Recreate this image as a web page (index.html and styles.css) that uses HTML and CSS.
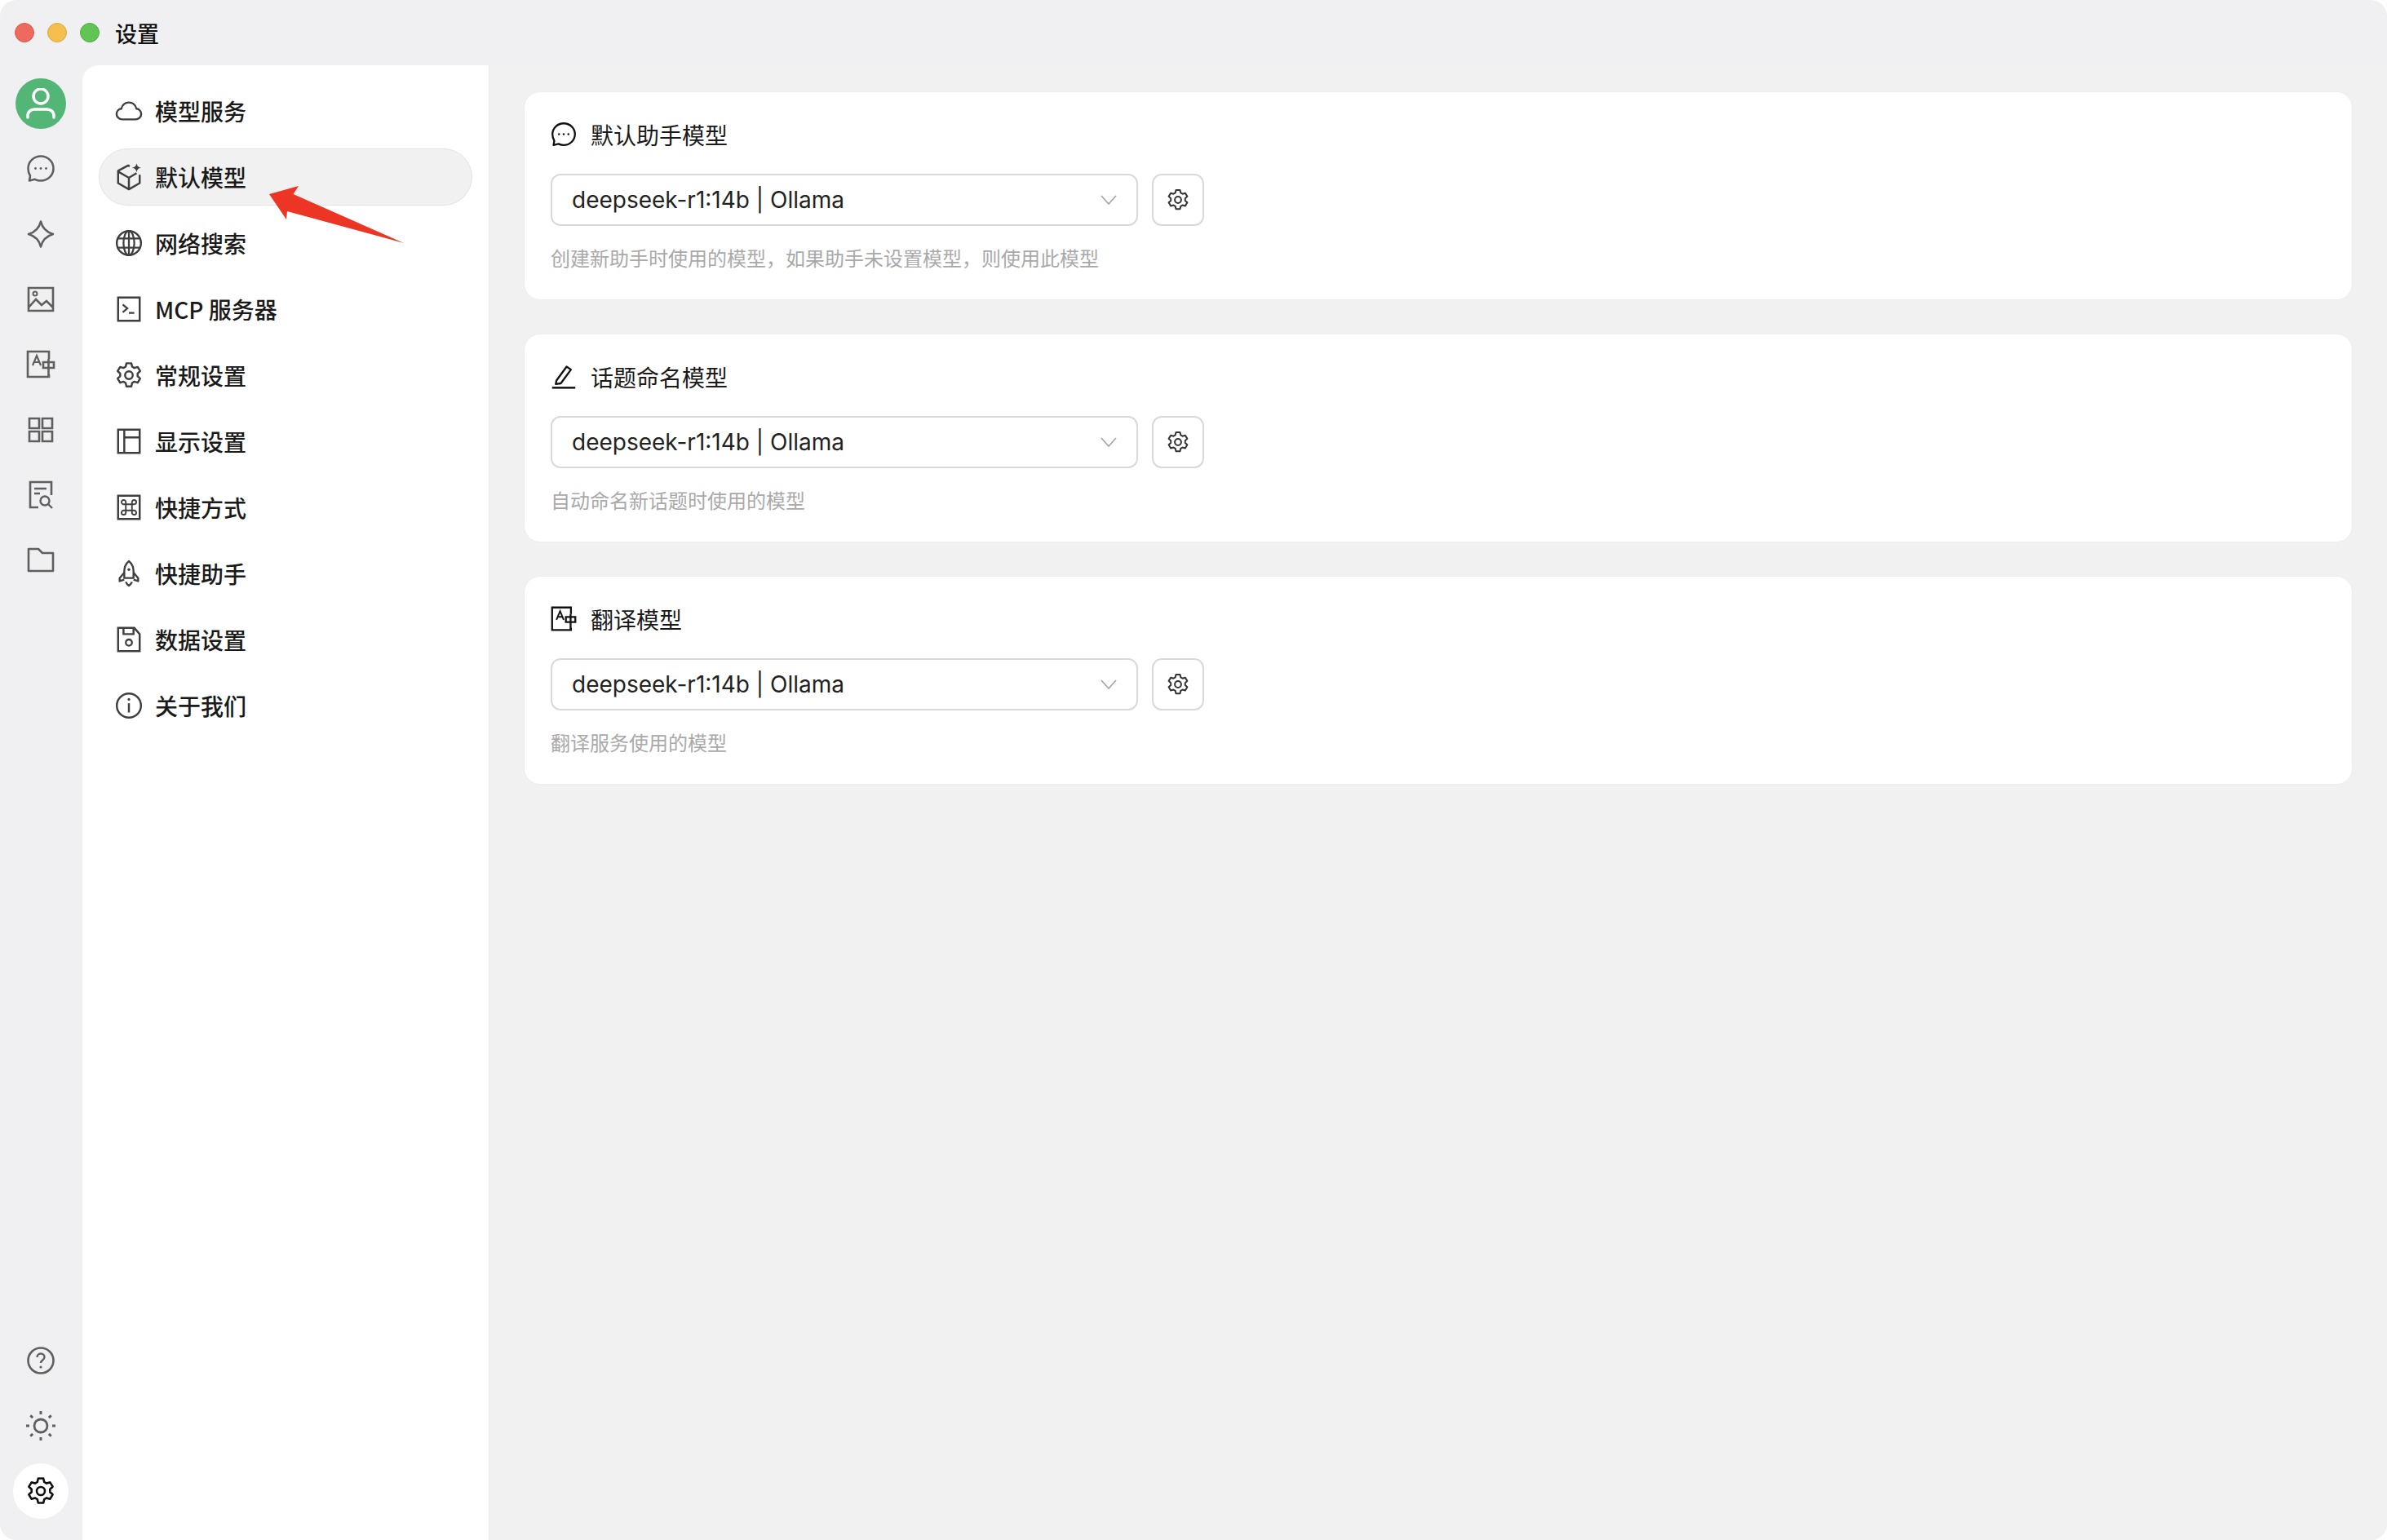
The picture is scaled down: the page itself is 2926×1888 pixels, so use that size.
FILE: index.html
```html
<!DOCTYPE html>
<html lang="zh-CN">
<head>
    <meta charset="UTF-8">
    <title>设置</title>
    <link rel="stylesheet" href="styles.css">
</head>
<body>
    <svg width="0" height="0" class="defs">
        <defs>
            <symbol id="i-chat" viewBox="0 0 36 36"><path d="M18 2.5c8.6 0 15.5 6.6 15.5 15s-6.900 15-15.500 15c-2.600 0-5-.6-7.200-1.700l-6.800 1.700 1-6c-1.600-2.500-2.500-5.700-2.500-9 0-8.400 6.900-15 15.500-15z" fill="none" stroke="currentColor" stroke-width="2.600" stroke-linejoin="round"/><circle cx="11.500" cy="17.500" r="1.400" fill="currentColor"/><circle cx="18" cy="17.500" r="1.400" fill="currentColor"/><circle cx="24.500" cy="17.500" r="1.400" fill="currentColor"/></symbol>
            <symbol id="i-star" viewBox="0 0 36 36"><path d="M18 2.500c1.800 7.500 6.500 13 15 15.500-8.500 2.500-13.200 8-15 15.500C16.200 26 11.500 20.500 3 18c8.500-2.500 13.200-8 15-15.500z" fill="none" stroke="currentColor" stroke-width="2.600" stroke-linejoin="round"/></symbol>
            <symbol id="i-image" viewBox="0 0 36 36"><path d="M3 4h30v28H3z M3 28l9-10 7 7 6-5 8 8" fill="none" stroke="currentColor" stroke-width="2.600"/><circle cx="11" cy="11" r="2.500" fill="none" stroke="currentColor" stroke-width="2"/></symbol>
            <symbol id="i-translate" viewBox="0 0 36 36"><path d="M28 11V2H2v31h26v-3" fill="none" stroke="currentColor" stroke-width="2.600"/><path d="M8 19l5-12 5 12M10 15h6" fill="none" stroke="currentColor" stroke-width="2.200"/><path d="M21 15h13v7H21z M27.500 11v22" fill="none" stroke="currentColor" stroke-width="2.600"/></symbol>
            <symbol id="i-grid" viewBox="0 0 36 36"><path d="M4 4h12v12H4z M20 4h12v12H20z M4 20h12v12H4z M20 20h12v12H20z" fill="none" stroke="currentColor" stroke-width="2.600"/></symbol>
            <symbol id="i-doc" viewBox="0 0 36 36"><path d="M15 33H5V2h26v16" fill="none" stroke="currentColor" stroke-width="2.600"/><path d="M10 10h15M10 16h7" fill="none" stroke="currentColor" stroke-width="2.400"/><circle cx="23" cy="25" r="5.500" fill="none" stroke="currentColor" stroke-width="2.400"/><path d="M27 29l5 5" stroke="currentColor" stroke-width="2.400"/></symbol>
            <symbol id="i-folder" viewBox="0 0 36 36"><path d="M3 4h12l5 5h13v22H3z" fill="none" stroke="currentColor" stroke-width="2.600" stroke-linejoin="round"/></symbol>
            <symbol id="i-help" viewBox="0 0 36 36"><circle cx="18" cy="18" r="15.500" fill="none" stroke="currentColor" stroke-width="2.600"/><path d="M13.500 14c0-2.600 2-4.500 4.500-4.500s4.500 1.800 4.500 4.200c0 3.800-4.500 3.700-4.500 7.300" fill="none" stroke="currentColor" stroke-width="2.400"/><circle cx="18" cy="26" r="1.600" fill="currentColor"/></symbol>
            <symbol id="i-sun" viewBox="0 0 36 36"><circle cx="18" cy="18" r="8" fill="none" stroke="currentColor" stroke-width="2.800"/><path d="M18 0v4M18 32v4M0 18h4M32 18h4M5.300 5.300l2.800 2.800M27.900 27.900l2.800 2.800M5.300 30.700l2.800-2.800M27.900 8.100l2.800-2.800" stroke="currentColor" stroke-width="3"/></symbol>
            <symbol id="i-gear" viewBox="0 0 36 36"><path d="M14.800 2.500h6.400l1 4.400 2.900 1.700 4.300-1.300 3.200 5.400-3.300 3.100v3.400l3.300 3.100-3.200 5.400-4.300-1.300-2.900 1.700-1 4.400h-6.400l-1-4.400-2.900-1.700-4.300 1.300-3.200-5.400 3.300-3.100v-3.400L3.400 12.700l3.200-5.400 4.300 1.300 2.900-1.700z" fill="none" stroke="currentColor" stroke-width="2.600" stroke-linejoin="round"/><circle cx="18" cy="18" r="5" fill="none" stroke="currentColor" stroke-width="2.600"/></symbol>
            <symbol id="i-cloud" viewBox="0 0 36 36"><path d="M9.500 29C5.300 29 2 25.900 2 22c0-3.500 2.700-6.400 6.200-6.900C9.300 10.400 13.300 7 18 7s8.700 3.400 9.800 8.100c3.500.5 6.200 3.400 6.200 6.900 0 3.900-3.300 7-7.500 7z" fill="none" stroke="currentColor" stroke-width="2.600" stroke-linejoin="round"/></symbol>
            <symbol id="i-cube" viewBox="0 0 36 36"><path d="M19 4L17 3 4 10v16l14 8 14-8V15" fill="none" stroke="currentColor" stroke-width="2.600" stroke-linejoin="round"/><path d="M4 11l14 8 10-6M18 19v15" fill="none" stroke="currentColor" stroke-width="2.600"/><path d="M28 0c.6 3.800 2.200 5.400 6 6-3.800.6-5.400 2.200-6 6-.6-3.800-2.200-5.400-6-6 3.800-.6 5.400-2.200 6-6z" fill="currentColor"/></symbol>
            <symbol id="i-globe" viewBox="0 0 36 36"><circle cx="18" cy="18" r="15.700" fill="none" stroke="currentColor" stroke-width="2.600"/><ellipse cx="18" cy="18" rx="7" ry="15.700" fill="none" stroke="currentColor" stroke-width="2.400"/><path d="M18 2v32M3 12h30M3 24h30" stroke="currentColor" stroke-width="2.400"/></symbol>
            <symbol id="i-terminal" viewBox="0 0 36 36"><path d="M4 3h28v30H4z" fill="none" stroke="currentColor" stroke-width="2.600"/><path d="M10 12l6 5-6 5M18 23h7" fill="none" stroke="currentColor" stroke-width="2.400"/></symbol>
            <symbol id="i-layout" viewBox="0 0 36 36"><path d="M4 3h28v30H4z M12 3v30 M12 13h20" fill="none" stroke="currentColor" stroke-width="2.600"/></symbol>
            <symbol id="i-cmd" viewBox="0 0 36 36"><path d="M4 3h28v30H4z" fill="none" stroke="currentColor" stroke-width="2.600"/><path d="M14 14h8v8h-8z M14 14h-2.500a2.800 2.800 0 1 1 2.500-2.800z M22 14v-2.800a2.800 2.800 0 1 1 2.800 2.800z M22 22h2.800a2.800 2.800 0 1 1-2.800 2.800z M14 22v2.800a2.800 2.800 0 1 1-2.800-2.800z" fill="none" stroke="currentColor" stroke-width="2"/></symbol>
            <symbol id="i-rocket" viewBox="0 0 36 36"><path d="M18 2c4 3.500 6 8 6 13v9H12v-9c0-5 2-9.500 6-13z" fill="none" stroke="currentColor" stroke-width="2.500" stroke-linejoin="round"/><path d="M12 17l-6 7v4l6-2M24 17l6 7v4l-6-2M14 29c1 2.500 2.500 4 4 5 1.500-1 3-2.500 4-5" fill="none" stroke="currentColor" stroke-width="2.500" stroke-linejoin="round"/><circle cx="18" cy="13" r="1.800" fill="currentColor"/></symbol>
            <symbol id="i-save" viewBox="0 0 36 36"><path d="M4 3h21l7 8v22H4z M11 3v8h13V3" fill="none" stroke="currentColor" stroke-width="2.600"/><circle cx="18" cy="22" r="4" fill="none" stroke="currentColor" stroke-width="2.400"/></symbol>
            <symbol id="i-info" viewBox="0 0 36 36"><circle cx="18" cy="18" r="15.700" fill="none" stroke="currentColor" stroke-width="2.600"/><path d="M18 15v12" stroke="currentColor" stroke-width="2.600"/><circle cx="18" cy="10" r="1.700" fill="currentColor"/></symbol>
            <symbol id="i-pen" viewBox="0 0 36 36"><path d="M8 23L22 4l6 4-14 19-7 1z" fill="none" stroke="currentColor" stroke-width="2.600" stroke-linejoin="round"/><path d="M2 33h32" stroke="currentColor" stroke-width="2.800"/></symbol>
        </defs>
    </svg>

    <div class="window">
        <header class="titlebar">
            <div class="lights">
                <span class="light red"></span>
                <span class="light yellow"></span>
                <span class="light green"></span>
            </div>
            <div class="title">设置</div>
        </header>

        <div class="body">
            <aside class="rail">
                <div class="rail-top">
                    <div class="avatar">
                        <svg width="36" height="38" viewBox="0 0 36 38"><circle cx="18" cy="10" r="9" fill="none" stroke="#fff" stroke-width="3.500"/><path d="M2 36v-2c0-5 4-8 8-8h16c4 0 8 3 8 8v2" fill="none" stroke="#fff" stroke-width="3.500" stroke-linecap="round"/></svg>
                    </div>
                    <a class="rail-btn"><svg class="ico"><use href="#i-chat"/></svg></a>
                    <a class="rail-btn"><svg class="ico"><use href="#i-star"/></svg></a>
                    <a class="rail-btn"><svg class="ico"><use href="#i-image"/></svg></a>
                    <a class="rail-btn"><svg class="ico"><use href="#i-translate"/></svg></a>
                    <a class="rail-btn"><svg class="ico"><use href="#i-grid"/></svg></a>
                    <a class="rail-btn"><svg class="ico"><use href="#i-doc"/></svg></a>
                    <a class="rail-btn"><svg class="ico"><use href="#i-folder"/></svg></a>
                </div>
                <div class="rail-bottom">
                    <a class="rail-btn"><svg class="ico"><use href="#i-help"/></svg></a>
                    <a class="rail-btn"><svg class="ico"><use href="#i-sun"/></svg></a>
                    <a class="rail-btn current"><svg class="ico"><use href="#i-gear"/></svg></a>
                </div>
            </aside>

            <nav class="menu">
                <a class="menu-item"><svg class="ico"><use href="#i-cloud"/></svg><span>模型服务</span></a>
                <a class="menu-item active"><svg class="ico"><use href="#i-cube"/></svg><span>默认模型</span></a>
                <a class="menu-item"><svg class="ico"><use href="#i-globe"/></svg><span>网络搜索</span></a>
                <a class="menu-item"><svg class="ico"><use href="#i-terminal"/></svg><span>MCP 服务器</span></a>
                <a class="menu-item"><svg class="ico"><use href="#i-gear"/></svg><span>常规设置</span></a>
                <a class="menu-item"><svg class="ico"><use href="#i-layout"/></svg><span>显示设置</span></a>
                <a class="menu-item"><svg class="ico"><use href="#i-cmd"/></svg><span>快捷方式</span></a>
                <a class="menu-item"><svg class="ico"><use href="#i-rocket"/></svg><span>快捷助手</span></a>
                <a class="menu-item"><svg class="ico"><use href="#i-save"/></svg><span>数据设置</span></a>
                <a class="menu-item"><svg class="ico"><use href="#i-info"/></svg><span>关于我们</span></a>
                <svg class="arrow" width="180" height="80" viewBox="0 0 180 80"><polygon points="5,58 41,48 34.500,58 170,118 27,79 26,89" transform="translate(0 -48)" fill="#ec3524"/></svg>
            </nav>

            <main class="content">
                <section class="card">
                    <h2 class="card-title"><svg class="ico"><use href="#i-chat"/></svg>默认助手模型</h2>
                    <div class="select-row">
                        <div class="select"><span>deepseek-r1:14b | Ollama</span><svg class="chevron" width="20" height="12" viewBox="0 0 20 12"><path d="M1 1l9 10 9-10" fill="none" stroke="currentColor" stroke-width="1.800"/></svg></div>
                        <button class="gear-btn"><svg class="ico"><use href="#i-gear"/></svg></button>
                    </div>
                    <p class="hint">创建新助手时使用的模型，如果助手未设置模型，则使用此模型</p>
                </section>
                <section class="card">
                    <h2 class="card-title"><svg class="ico"><use href="#i-pen"/></svg>话题命名模型</h2>
                    <div class="select-row">
                        <div class="select"><span>deepseek-r1:14b | Ollama</span><svg class="chevron" width="20" height="12" viewBox="0 0 20 12"><path d="M1 1l9 10 9-10" fill="none" stroke="currentColor" stroke-width="1.800"/></svg></div>
                        <button class="gear-btn"><svg class="ico"><use href="#i-gear"/></svg></button>
                    </div>
                    <p class="hint">自动命名新话题时使用的模型</p>
                </section>
                <section class="card">
                    <h2 class="card-title"><svg class="ico"><use href="#i-translate"/></svg>翻译模型</h2>
                    <div class="select-row">
                        <div class="select"><span>deepseek-r1:14b | Ollama</span><svg class="chevron" width="20" height="12" viewBox="0 0 20 12"><path d="M1 1l9 10 9-10" fill="none" stroke="currentColor" stroke-width="1.800"/></svg></div>
                        <button class="gear-btn"><svg class="ico"><use href="#i-gear"/></svg></button>
                    </div>
                    <p class="hint">翻译服务使用的模型</p>
                </section>
            </main>
        </div>
    </div>
</body>
</html>
```

FILE: styles.css
```css
* {
    box-sizing: border-box;
}

html, body {
    height: 100%;
}

body {
    margin: 0;
    background-color: #fff;
    font-family: Inter, "Noto Sans CJK SC", sans-serif;
    color: #1b1b1b;
}

.defs {
    display: block;
    width: 0;
    height: 0;
}

.window {
    display: flex;
    flex-direction: column;
    height: 100%;
    background-color: #f0f0f2;
    border-radius: 20px;
    overflow: hidden;
}

.titlebar {
    display: flex;
    align-items: center;
    flex: 0 0 80px;
    padding-left: 18px;
}

.lights {
    display: flex;
    gap: 16px;
}

.light {
    width: 24px;
    height: 24px;
    border-radius: 50%;
}

.red { background-color: #ee6a5f; border: 1px solid #d9584e; }
.yellow { background-color: #f5bf4f; border: 1px solid #dea73a; }
.green { background-color: #61c554; border: 1px solid #52ad46; }

.title {
    margin-left: 19px;
    font-family: "Noto Sans CJK SC", sans-serif;
    font-size: 27px;
    font-weight: 500;
    color: #111;
}

.body {
    display: flex;
    flex: 1;
    min-height: 0;
}

.rail {
    display: flex;
    flex-direction: column;
    justify-content: space-between;
    flex: 0 0 101px;
    padding-bottom: 26px;
}

.rail-top, .rail-bottom {
    display: flex;
    flex-direction: column;
    align-items: center;
    padding-right: 1px;
}

.rail-top {
    padding-top: 16px;
    gap: 18px;
}

.rail-bottom {
    gap: 12px;
}

.avatar {
    display: flex;
    align-items: center;
    justify-content: center;
    width: 62px;
    height: 62px;
    margin-bottom: 0;
    border-radius: 50%;
    background-color: #53b676;
}

.rail-btn {
    display: flex;
    align-items: center;
    justify-content: center;
    width: 68px;
    height: 62px;
    color: #5f5f5f;
}

.rail-bottom .rail-btn {
    height: 68px;
}

.rail-btn.current {
    border-radius: 50%;
    background-color: #fff;
    color: #111;
}

.ico {
    width: 36px;
    height: 36px;
    flex: none;
}

.menu {
    position: relative;
    display: flex;
    flex-direction: column;
    gap: 11px;
    flex: 0 0 499px;
    padding: 21px 20px 0;
    background-color: #fff;
    border-right: 1px solid #ececec;
    border-top-left-radius: 20px;
    font-family: "Noto Sans CJK SC", sans-serif;
}

.menu-item {
    display: flex;
    align-items: center;
    gap: 15px;
    height: 70px;
    padding-left: 19px;
    border: 1px solid transparent;
    border-radius: 35px;
    font-size: 28px;
    font-weight: 500;
    color: #1a1a1a;
}

.menu-item .ico {
    width: 34px;
    height: 34px;
    color: #3f3f3f;
}

.menu-item.active {
    background-color: #f1f1f1;
    border-color: #e3e3e3;
}

.arrow {
    position: absolute;
    left: 224px;
    top: 148px;
    overflow: visible;
}

.content {
    flex: 1;
    display: flex;
    flex-direction: column;
    gap: 41px;
    padding: 32px 42px 0;
    background-color: #f1f1f1;
}

.card {
    height: 256px;
    padding: 32px 32px 0;
    background-color: #fff;
    border: 1px solid #ededed;
    border-radius: 20px;
}

.card-title {
    display: flex;
    align-items: center;
    gap: 17px;
    height: 40px;
    margin: 0 0 28px;
    font-family: "Noto Sans CJK SC", sans-serif;
    font-size: 28px;
    font-weight: 400;
    color: #1a1a1a;
}

.card-title .ico {
    width: 32px;
    height: 32px;
    color: #111;
}

.select-row {
    display: flex;
    gap: 17px;
}

.select {
    display: flex;
    align-items: center;
    justify-content: space-between;
    width: 720px;
    height: 64px;
    padding: 0 24px;
    border: 2px solid #d9d9d9;
    border-radius: 12px;
    background-color: #fff;
    font-size: 28px;
    color: #222;
}

.chevron {
    color: #a8a8a8;
}

.gear-btn {
    display: flex;
    align-items: center;
    justify-content: center;
    width: 64px;
    height: 64px;
    padding: 0;
    border: 2px solid #d9d9d9;
    border-radius: 12px;
    background-color: #fff;
    color: #333;
}

.gear-btn .ico {
    width: 28px;
    height: 28px;
}

.hint {
    margin: 23px 0 0;
    height: 32px;
    line-height: 32px;
    font-family: "Noto Sans CJK SC", sans-serif;
    font-size: 24px;
    color: #a9a9a9;
}
```
